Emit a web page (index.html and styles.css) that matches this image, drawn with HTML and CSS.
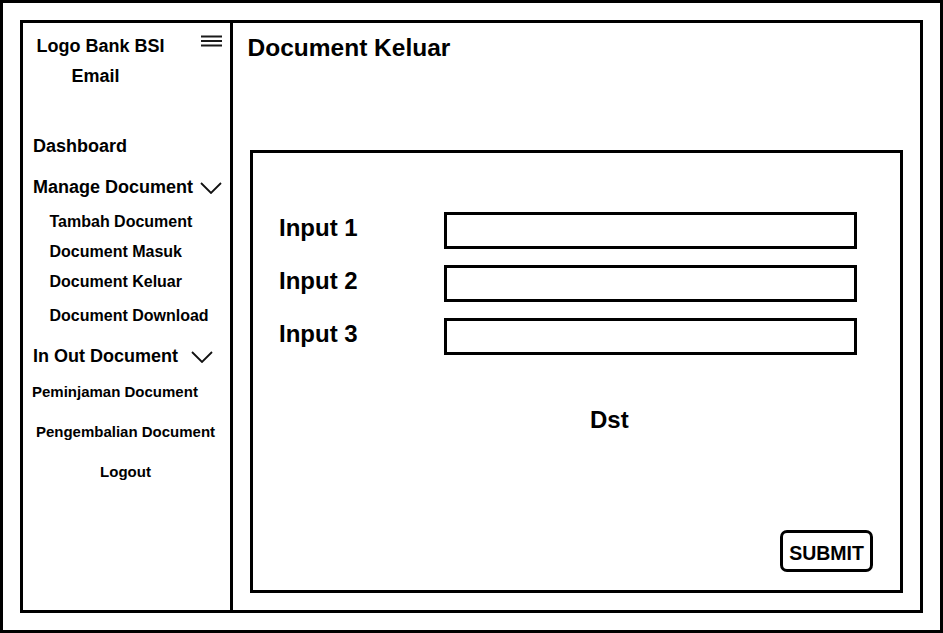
FILE: index.html
```html
<!DOCTYPE html>
<html lang="id">
<head>
  <meta charset="UTF-8">
  <meta name="viewport" content="width=device-width, initial-scale=1.0">
  <title>Document Keluar</title>
  <link rel="stylesheet" href="styles.css">
</head>
<body>
  <div class="screen">
    <div class="frame">
      <!-- Sidebar -->
      <aside class="sidebar">
        <div class="brand">
          <span class="logo">Logo Bank BSI</span>
          <svg class="burger" width="21" height="13" viewBox="0 0 21 13">
            <path d="M0 1.5H21M0 6H21M0 10.5H21" stroke="#1a1a1a" stroke-width="2" fill="none"/>
          </svg>
        </div>
        <div class="email">Email</div>

        <div class="nav-top dashboard">Dashboard</div>

        <div class="nav-top manage">
          <span>Manage Document</span>
          <svg class="chevron" width="22" height="12" viewBox="0 0 22 12">
            <path d="M1 1L11 11L21 1" stroke="#111" stroke-width="1.8" fill="none"/>
          </svg>
        </div>
        <ul class="submenu">
          <li>Tambah Document</li>
          <li>Document Masuk</li>
          <li>Document Keluar</li>
          <li class="download">Document Download</li>
        </ul>

        <div class="nav-top inout">
          <span>In Out Document</span>
          <svg class="chevron" width="22" height="12" viewBox="0 0 22 12">
            <path d="M1 1L11 11L21 1" stroke="#111" stroke-width="1.8" fill="none"/>
          </svg>
        </div>
        <div class="nav-small pinjam">Peminjaman Document</div>
        <div class="nav-small centered">Pengembalian Document</div>
        <div class="nav-small centered">Logout</div>
      </aside>

      <!-- Main content -->
      <main class="content">
        <h1>Document Keluar</h1>
        <form class="panel">
          <div class="field">
            <label>Input 1</label>
            <input type="text">
          </div>
          <div class="field">
            <label>Input 2</label>
            <input type="text">
          </div>
          <div class="field">
            <label>Input 3</label>
            <input type="text">
          </div>
          <p class="more">Dst</p>
          <button type="button" class="submit">SUBMIT</button>
        </form>
      </main>
    </div>
  </div>
</body>
</html>
```

FILE: styles.css
```css
* {
  margin: 0;
  padding: 0;
  box-sizing: border-box;
  font-family: "Liberation Sans", Arial, sans-serif;
}
body {
  background: #fff;
  color: #000;
}
.screen {
  width: 943px;
  height: 633px;
  border: 3px solid #000;
  padding: 17px;
}
.frame {
  display: flex;
  height: 100%;
  border: 3px solid #000;
}

/* sidebar */
.sidebar {
  width: 210px;
  flex-shrink: 0;
  border-right: 3px solid #000;
  padding: 12px 12px 0 10px;
  font-weight: 700;
}
.brand {
  display: flex;
  justify-content: space-between;
  align-items: flex-start;
  margin-right: -4px;
}
.logo {
  margin-left: 3.5px;
  font-size: 18px;
  line-height: 22px;
}
.email {
  margin: 8px 0 0 38.5px;
  font-size: 18px;
  line-height: 22px;
}
.nav-top {
  font-size: 18px;
  line-height: 22px;
  display: flex;
  align-items: flex-start;
  white-space: nowrap;
}
.nav-top .chevron {
  flex-shrink: 0;
  margin-top: 6px;
}
.dashboard {
  margin-top: 48px;
}
.manage {
  margin-top: 19px;
  gap: 7px;
}
.inout {
  margin-top: 19px;
  gap: 13px;
}
.submenu {
  list-style: none;
  margin: 14px 0 0 16.5px;
  display: flex;
  flex-direction: column;
  gap: 10px;
}
.submenu li {
  font-size: 16px;
  line-height: 20px;
  white-space: nowrap;
}
.submenu .download {
  margin-top: 4px;
}
.nav-small {
  font-size: 15px;
  line-height: 20px;
  white-space: nowrap;
}
.pinjam {
  margin: 15px 0 0 -1px;
}
.centered {
  margin-top: 20px;
  text-align: center;
}

/* main */
.content {
  flex: 1;
  display: flex;
  flex-direction: column;
  padding: 10px 17px 17px;
}
h1 {
  font-size: 24.5px;
  line-height: 30px;
  font-weight: 700;
  margin-left: -2.5px;
}
.panel {
  flex: 1;
  margin-top: 87px;
  border: 3px solid #000;
  padding: 59px 27px 18px 26px;
  display: flex;
  flex-direction: column;
}
.field {
  display: flex;
  align-items: flex-start;
  margin-bottom: 16px;
}
.field label {
  width: 165px;
  font-size: 24px;
  line-height: 31px;
  font-weight: 700;
}
.field input {
  width: 413px;
  height: 37px;
  border: 3px solid #000;
  background: #fff;
  outline: none;
}
.more {
  margin: 34px 0 0 311px;
  font-size: 24px;
  line-height: 30px;
  font-weight: 700;
}
.submit {
  margin-top: auto;
  align-self: flex-end;
  width: 93px;
  height: 42px;
  padding-top: 4px;
  border: 3px solid #000;
  border-radius: 7px;
  background: #fff;
  color: #000;
  font-size: 19.5px;
  font-weight: 700;
  cursor: pointer;
}
```
